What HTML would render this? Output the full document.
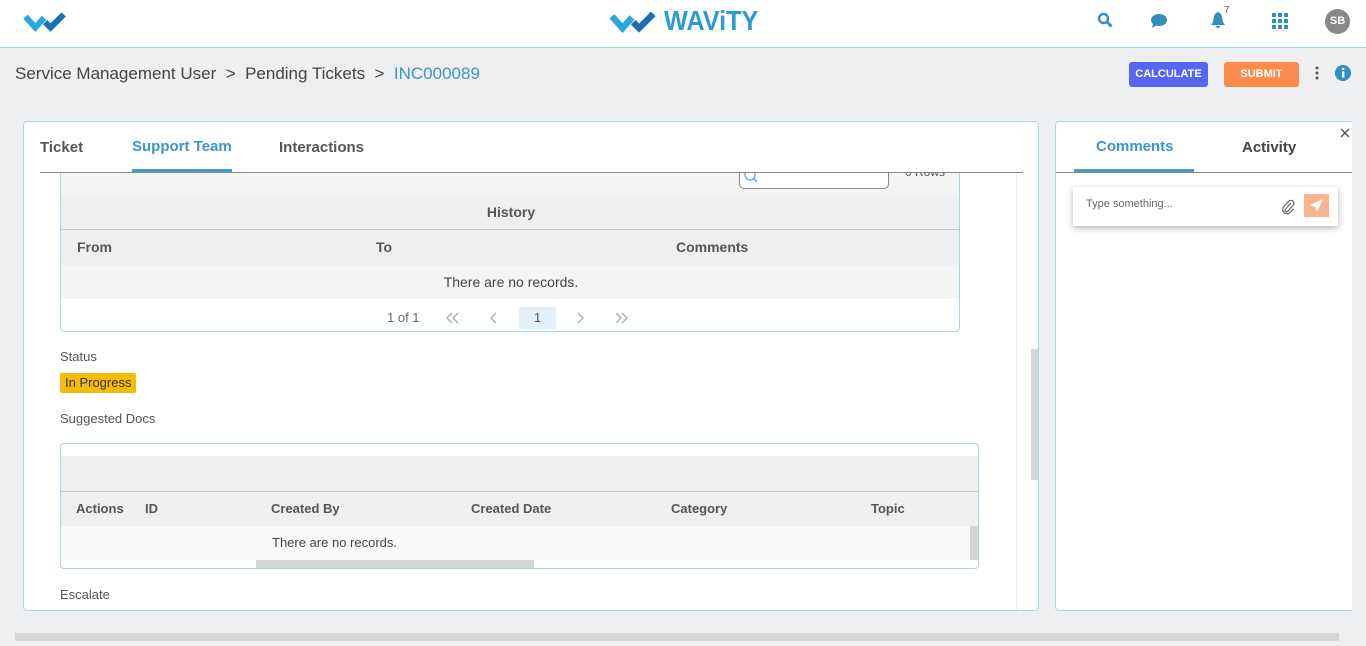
<!DOCTYPE html>
<html><head><meta charset="utf-8"><style>
*{box-sizing:border-box;margin:0;padding:0}
body{width:1366px;height:646px;overflow:hidden;background:#eeeff1;font-family:"Liberation Sans",sans-serif;color:#444;position:relative}
.abs{position:absolute}
.hdr{left:0;top:0;width:1366px;height:48px;background:#fff;border-bottom:1px solid #a8d4e2}
.card{background:#fff;border:1px solid #a9d8e3;border-radius:4px}
.th{font-weight:bold;font-size:14px;color:#555}
</style></head><body>
<div class="abs hdr">
 <svg class="abs" style="left:18px;top:9px" width="52" height="24" viewBox="0 0 40 22"><path d="M3 7 L12 17 L20 8" stroke="#29a8df" stroke-width="5.5" fill="none"/><path d="M21 12 L26 17 L38 5" stroke="#1d6fb5" stroke-width="5.5" fill="none"/></svg>
 <svg class="abs" style="left:602px;top:8px" width="60" height="26" viewBox="0 0 40 22"><path d="M3 7 L12 17 L20 8" stroke="#29a8df" stroke-width="5.5" fill="none"/><path d="M21 12 L26 17 L38 5" stroke="#1d6fb5" stroke-width="5.5" fill="none"/></svg>
 <div class="abs" style="left:664px;top:5px;font-size:28px;color:#2b9bd3;font-weight:bold;transform:scaleX(0.9);transform-origin:left">WAViTY</div>
 <svg class="abs" style="left:1097px;top:12px" width="16" height="16"><circle cx="6.5" cy="6.5" r="4.5" stroke="#2e8fc0" stroke-width="2.4" fill="none"/><path d="M10 10 L14.5 14.5" stroke="#2e8fc0" stroke-width="3"/></svg>
 <svg class="abs" style="left:1150px;top:13px" width="18" height="16"><ellipse cx="9" cy="7" rx="8" ry="6" fill="#2e8fc0"/><path d="M3 11 L2 15 L7 12z" fill="#2e8fc0"/></svg>
 <svg class="abs" style="left:1210px;top:11px" width="16" height="18"><path d="M8 1 C3 3 4 8 3 11 L1 14 H15 L13 11 C12 8 13 3 8 1z M6 15 h4 a2 2 0 0 1 -4 0z" fill="#2e8fc0"/></svg>
 <div class="abs" style="left:1224px;top:5px;font-size:10px;color:#c0392b">7</div>
 <svg class="abs" style="left:1272px;top:13px" width="16" height="16" fill="#2e8fc0"><rect x="0" y="0" width="4" height="4"/><rect x="6" y="0" width="4" height="4"/><rect x="12" y="0" width="4" height="4"/><rect x="0" y="6" width="4" height="4"/><rect x="6" y="6" width="4" height="4"/><rect x="12" y="6" width="4" height="4"/><rect x="0" y="12" width="4" height="4"/><rect x="6" y="12" width="4" height="4"/><rect x="12" y="12" width="4" height="4"/></svg>
 <div class="abs" style="left:1325px;top:9px;width:25px;height:25px;border-radius:50%;background:#888;color:#fff;font-size:11px;font-weight:bold;text-align:center;line-height:25px">SB</div>
</div>
<div class="abs" style="left:15px;top:64px;font-size:17px;color:#444">Service Management User &nbsp;&gt;&nbsp; Pending Tickets &nbsp;&gt;&nbsp; <span style="color:#3c96c5">INC000089</span></div>
<div class="abs" style="left:1129px;top:62px;width:79px;height:25px;background:#5766f2;border-radius:3px;color:#fff;font-size:11px;font-weight:bold;text-align:center;line-height:25px">CALCULATE</div>
<div class="abs" style="left:1224px;top:62px;width:75px;height:25px;background:#fb8c4b;border-radius:3px;color:#fff;font-size:11px;font-weight:bold;text-align:center;line-height:25px">SUBMIT</div>
<svg class="abs" style="left:1314px;top:66px" width="6" height="16" fill="#555"><circle cx="3" cy="2" r="1.5"/><circle cx="3" cy="7" r="1.5"/><circle cx="3" cy="12" r="1.5"/></svg>
<svg class="abs" style="left:1335px;top:65px" width="16" height="16"><circle cx="8" cy="8" r="8" fill="#2e8fc0"/><rect x="7" y="6.5" width="2.4" height="6" fill="#fff"/><circle cx="8.2" cy="4" r="1.3" fill="#fff"/></svg>

<div class="abs card" style="left:23px;top:121px;width:1016px;height:490px;overflow:hidden">
 <div class="abs" style="left:16px;top:17px;font-size:15px;font-weight:bold;color:#555">Ticket</div>
 <div class="abs" style="left:108px;top:16px;font-size:15px;font-weight:bold;color:#3c96c5">Support Team</div>
 <div class="abs" style="left:108px;top:47px;width:100px;height:3px;background:#4b9bbf"></div>
 <div class="abs" style="left:255px;top:17px;font-size:15px;font-weight:bold;color:#555">Interactions</div>
 <div class="abs" style="left:16px;top:50px;width:983px;height:1px;background:#888"></div>
 <div class="abs" style="left:992px;top:51px;width:1px;height:440px;background:#eee"></div>
 <div class="abs" style="left:1007px;top:227px;width:8px;height:131px;background:#d5d5d5"></div>
 <div class="abs" style="left:36px;top:51px;width:900px;height:159px;border:1px solid #a9d8e3;border-top:none;border-radius:0 0 4px 4px;background:#fff;overflow:hidden">
  <div class="abs" style="left:0;top:0;width:900px;height:22px;background:#f4f4f5"></div>
  <div class="abs" style="left:678px;top:-8px;width:150px;height:24px;border:1px solid #888;border-radius:5px;background:#fff"></div>
  <svg class="abs" style="left:683px;top:-4px" width="16" height="16"><circle cx="6" cy="6" r="5" stroke="#5aa9cc" fill="none" stroke-width="1.3"/><path d="M9.5 9.5 L13 13" stroke="#5aa9cc" stroke-width="1.3"/></svg>
  <div class="abs" style="left:844px;top:-8px;font-size:12px;color:#555">0 Rows</div>
  <div class="abs" style="left:0;top:22px;width:900px;height:35px;background:#eeeff1;border-bottom:1px solid #c8c8c8;text-align:center;line-height:35px" ><span class="th">History</span></div>
  <div class="abs" style="left:0;top:57px;width:900px;height:35px;background:#eeeff1;line-height:35px"><span class="th abs" style="left:16px">From</span><span class="th abs" style="left:315px">To</span><span class="th abs" style="left:615px">Comments</span></div>
  <div class="abs" style="left:0;top:92px;width:900px;height:34px;background:#f4f5f5;text-align:center;line-height:34px;font-size:14px">There are no records.</div>
  <svg class="abs" style="left:326px;top:134px" width="300" height="22">
   <text x="0" y="15" font-family="Liberation Sans" font-size="13" fill="#666">1 of 1</text>
   <path d="M65 6 L60 11 L65 16 M71 6 L66 11 L71 16 M109 6 L104 11 L109 16 M191 6 L196 11 L191 16 M229 6 L234 11 L229 16 M235 6 L240 11 L235 16" stroke="#aaa" stroke-width="1.3" fill="none"/>
  </svg>
  <div class="abs" style="left:458px;top:134px;width:37px;height:22px;background:#e3f0fa;text-align:center;line-height:22px;font-size:13px;color:#555">1</div>
 </div>
 <div class="abs" style="left:36px;top:227px;font-size:13px;color:#555">Status</div>
 <div class="abs" style="left:36px;top:251px;height:20px;padding:0 5px;background:#f7bb07;font-size:13px;line-height:20px;color:#333;border-radius:2px">In Progress</div>
 <div class="abs" style="left:36px;top:289px;font-size:13px;color:#555">Suggested Docs</div>
 <div class="abs" style="left:36px;top:321px;width:919px;height:126px;border:1px solid #a9d8e3;border-radius:4px;overflow:hidden;background:#fff">
  <div class="abs" style="left:0;top:12px;width:920px;height:36px;background:#eeeff1;border-bottom:1px solid #c8c8c8"></div>
  <div class="abs" style="left:0;top:48px;width:920px;height:34px;background:#eeeff1;line-height:34px">
   <span class="th abs" style="left:15px;font-size:13px">Actions</span><span class="th abs" style="left:84px;font-size:13px">ID</span><span class="th abs" style="left:210px;font-size:13px">Created By</span><span class="th abs" style="left:410px;font-size:13px">Created Date</span><span class="th abs" style="left:610px;font-size:13px">Category</span><span class="th abs" style="left:810px;font-size:13px">Topic</span></div>
  <div class="abs" style="left:0;top:82px;width:920px;height:34px;background:#f9f9f9;line-height:34px;font-size:13px"><span class="abs" style="left:211px">There are no records.</span></div>
  <div class="abs" style="left:909px;top:82px;width:8px;height:34px;background:#d5d5d5"></div>
  <div class="abs" style="left:195px;top:116px;width:278px;height:8px;background:#d5d5d5"></div>
 </div>
 <div class="abs" style="left:36px;top:465px;font-size:13px;color:#555">Escalate</div>
</div>

<div class="abs card" style="left:1055px;top:121px;width:297px;height:490px;border-right:none;border-radius:4px 0 0 4px">
 <div class="abs" style="left:40px;top:16px;font-size:15px;font-weight:bold;color:#3c96c5">Comments</div>
 <div class="abs" style="left:18px;top:47px;width:120px;height:3px;background:#4b9bbf"></div>
 <div class="abs" style="left:186px;top:17px;font-size:15px;font-weight:bold;color:#444">Activity</div>
 <svg class="abs" style="left:284px;top:6px" width="10" height="10"><path d="M1 1 L9 9 M9 1 L1 9" stroke="#555" stroke-width="1.4"/></svg>
 <div class="abs" style="left:0;top:50px;width:296px;height:1px;background:#888"></div>
 <div class="abs" style="left:17px;top:65px;width:265px;height:39px;background:#fff;box-shadow:0 2px 6px rgba(0,0,0,.3)">
  <div class="abs" style="left:13px;top:11px;font-size:11px;color:#666">Type something...</div>
  <svg class="abs" style="left:208px;top:12px" width="14" height="16"><path d="M10 4 L4.5 10 a1.6 1.6 0 0 0 2.3 2.3 L12 6.5 a3 3 0 0 0 -4.3 -4.3 L2.5 8 a4.3 4.3 0 0 0 6 6 L12.5 10" stroke="#666" stroke-width="1.2" fill="none"/></svg>
  <div class="abs" style="left:231px;top:7px;width:25px;height:23px;background:#fbb58e"></div>
  <svg class="abs" style="left:236px;top:11px" width="15" height="15"><path d="M14 1 L1 7 L6 9 L8 14z" fill="#fff"/></svg>
 </div>
</div>
<div class="abs" style="left:15px;top:633px;width:1324px;height:8px;background:#d6d6d6"></div>
</body></html>
